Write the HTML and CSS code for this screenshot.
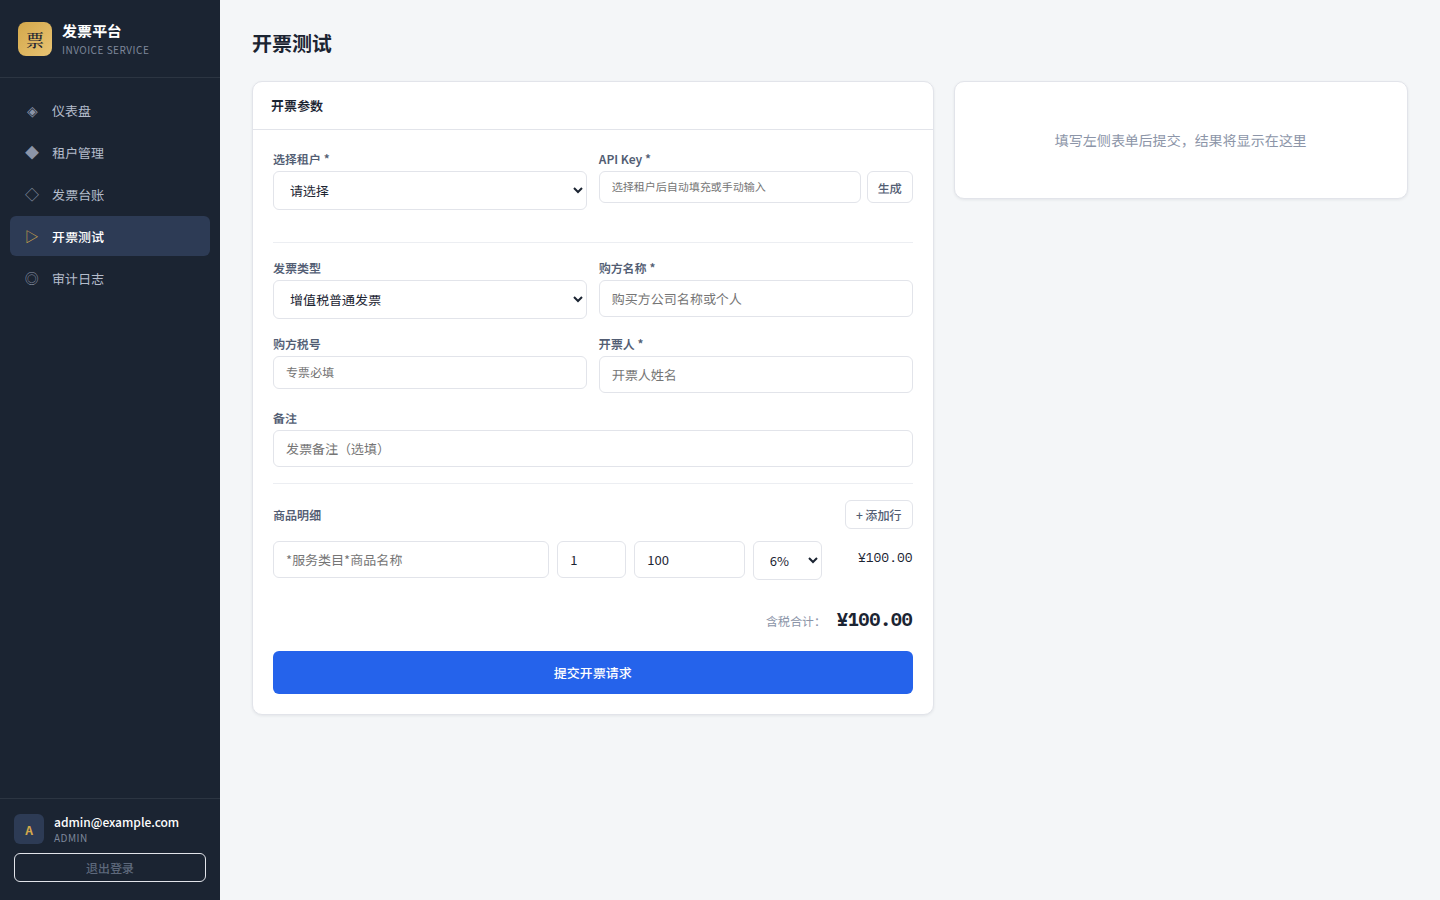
FILE: index.html
```html
<!DOCTYPE html>
<html lang="zh-CN">
<head>
<meta charset="UTF-8">
<meta name="viewport" content="width=device-width, initial-scale=1">
<title>开票测试 - 发票平台</title>
<link rel="stylesheet" href="styles.css">
</head>
<body>
<div class="app">
  <aside class="sidebar">
    <div class="brand">
      <div class="brand-logo">票</div>
      <div>
        <div class="brand-name">发票平台</div>
        <div class="brand-sub">INVOICE SERVICE</div>
      </div>
    </div>
    <nav class="nav">
      <a class="nav-item" href="#dashboard"><span class="nav-icon">◈</span>仪表盘</a>
      <a class="nav-item" href="#tenants"><span class="nav-icon">◆</span>租户管理</a>
      <a class="nav-item" href="#invoices"><span class="nav-icon">◇</span>发票台账</a>
      <a class="nav-item active" href="#test" aria-current="page"><span class="nav-icon">▷</span>开票测试</a>
      <a class="nav-item" href="#audit"><span class="nav-icon">◎</span>审计日志</a>
    </nav>
    <div class="account">
      <div class="account-user">
        <div class="avatar">A</div>
        <div>
          <div class="account-name">admin@example.com</div>
          <div class="account-role">ADMIN</div>
        </div>
      </div>
      <button class="btn-logout" type="button">退出登录</button>
    </div>
  </aside>

  <main class="main">
    <h1 class="page-title">开票测试</h1>
    <div class="columns">
      <section class="card">
        <h2 class="card-head">开票参数</h2>
        <form class="card-body">
          <div class="form-grid">
            <div class="field">
              <label class="label" for="tenant">选择租户 *</label>
              <select class="control select" id="tenant"><option>请选择</option></select>
            </div>
            <div class="field">
              <label class="label" for="apikey">API Key *</label>
              <div class="key-row">
                <input class="control mono key-input" id="apikey" type="text" placeholder="选择租户后自动填充或手动输入">
                <button class="btn-small" type="button">生成</button>
              </div>
            </div>
          </div>
          <hr class="divider">
          <div class="form-grid">
            <div class="field">
              <label class="label" for="type">发票类型</label>
              <select class="control select" id="type"><option>增值税普通发票</option></select>
            </div>
            <div class="field">
              <label class="label" for="buyer">购方名称 *</label>
              <input class="control" id="buyer" type="text" placeholder="购买方公司名称或个人">
            </div>
            <div class="field">
              <label class="label" for="taxno">购方税号</label>
              <input class="control mono tax-input" id="taxno" type="text" placeholder="专票必填">
            </div>
            <div class="field">
              <label class="label" for="drawer">开票人 *</label>
              <input class="control" id="drawer" type="text" placeholder="开票人姓名">
            </div>
          </div>
          <div class="field">
            <label class="label" for="remark">备注</label>
            <input class="control" id="remark" type="text" placeholder="发票备注（选填）">
          </div>
          <hr class="divider">
          <div class="items-head">
            <span class="items-title">商品明细</span>
            <button class="btn-small" type="button">+ 添加行</button>
          </div>
          <div class="item-row">
            <input class="control" type="text" aria-label="商品名称" placeholder="*服务类目*商品名称">
            <input class="control" type="number" aria-label="数量" value="1">
            <input class="control" type="number" aria-label="单价" value="100">
            <select class="control select" aria-label="税率"><option>6%</option></select>
            <div class="item-amount">¥100.00</div>
          </div>
          <div class="total">
            <span class="total-label">含税合计：</span>
            <span class="total-value">¥100.00</span>
          </div>
          <button class="btn-submit" type="submit">提交开票请求</button>
        </form>
      </section>
      <section class="card empty">填写左侧表单后提交，结果将显示在这里</section>
    </div>
  </main>
</div>
</body>
</html>
```
FILE: styles.css
```css
:root {
  --navy: #1b2432;
  --navy-light: #2d3b55;
  --gold: #d4a84b;
  --line: #e2e4ea;
  --text: #1b2432;
  --text-mid: #525d73;
  --text-dim: #8c95a8;
  --sans: "Noto Sans SC", "Noto Sans CJK SC", sans-serif;
  --mono: "IBM Plex Mono", "Liberation Mono", "Noto Sans SC", "Noto Sans CJK SC", monospace;
}

* { box-sizing: border-box; }

body {
  margin: 0;
  background: #f4f6f8;
  color: var(--text);
  font-family: var(--sans);
  font-size: 14px;
}

input, select, button { font-family: inherit; }

.app { display: flex; min-height: 100vh; }

.sidebar {
  position: sticky;
  top: 0;
  display: flex;
  flex-direction: column;
  flex: none;
  width: 220px;
  height: 100vh;
  background: var(--navy);
}

.brand {
  display: flex;
  align-items: center;
  gap: 10px;
  padding: 20px 18px;
  border-bottom: 1px solid rgba(255, 255, 255, 0.08);
}

.brand-logo {
  display: grid;
  place-items: center;
  width: 34px;
  height: 34px;
  border-radius: 8px;
  background: linear-gradient(135deg, #d4a84b, #e8c373);
  color: var(--navy);
  font-family: "Noto Serif SC", "Noto Serif CJK SC", serif;
  font-size: 18px;
  line-height: 24px;
  font-weight: 500;
}

.brand-name { color: #fff; font-size: 15px; line-height: 22px; font-weight: 700; }
.brand-sub { color: #7d879a; font-size: 10px; line-height: 15px; letter-spacing: 0.5px; }

.nav {
  display: flex;
  flex: 1;
  flex-direction: column;
  gap: 2px;
  padding: 12px 10px;
}

.nav-item {
  display: flex;
  align-items: center;
  gap: 10px;
  height: 40px;
  padding: 0 12px;
  border-radius: 6px;
  color: #b4bccb;
  font-size: 13px;
  line-height: 21px;
  text-decoration: none;
}

.nav-icon { width: 20px; color: #8c95a8; font-size: 14px; line-height: 18px; text-align: center; }
.nav-item.active { background: var(--navy-light); color: #fff; font-weight: 500; }
.nav-item.active .nav-icon { color: var(--gold); }

.account { padding: 14px 14px 18px; border-top: 1px solid rgba(255, 255, 255, 0.08); }
.account-user { display: flex; align-items: center; gap: 10px; margin-bottom: 8px; }

.avatar {
  display: grid;
  place-items: center;
  width: 30px;
  height: 30px;
  border-radius: 6px;
  background: var(--navy-light);
  color: var(--gold);
  font-size: 12px;
  font-weight: 700;
}

.account-name { color: #fff; font-size: 12px; line-height: 17px; font-weight: 500; }
.account-role { color: #7d879a; font-size: 10px; line-height: 15px; letter-spacing: 0.5px; }

.btn-logout {
  width: 100%;
  height: 29px;
  padding: 0;
  border: 1px solid var(--line);
  border-radius: 6px;
  background: transparent;
  color: #5d687b;
  font-size: 12px;
  font-weight: 500;
}

.main { flex: 1; min-width: 0; padding: 28px 32px; }
.page-title { margin: 0 0 24px; font-size: 20px; line-height: 29px; font-weight: 700; }

.columns {
  display: grid;
  grid-template-columns: 3fr 2fr;
  align-items: start;
  gap: 20px;
}

.card {
  border: 1px solid var(--line);
  border-radius: 10px;
  background: #fff;
  box-shadow: 0 1px 3px rgba(27, 36, 50, 0.08);
}

.card-head {
  margin: 0;
  padding: 14px 18px;
  border-bottom: 1px solid var(--line);
  font-size: 13px;
  line-height: 19px;
  font-weight: 600;
}

.card-body { padding: 20px; }

.empty {
  padding: 48px 20px;
  color: var(--text-dim);
  font-size: 14px;
  line-height: 20px;
  text-align: center;
}

.form-grid { display: grid; grid-template-columns: 1fr 1fr; column-gap: 12px; }
.field { margin-bottom: 16px; }

.label {
  display: block;
  margin-bottom: 4px;
  color: var(--text-mid);
  font-size: 12px;
  line-height: 17px;
  font-weight: 600;
}

.control {
  display: block;
  width: 100%;
  min-width: 0;
  height: 37px;
  padding: 8px 12px;
  border: 1px solid var(--line);
  border-radius: 6px;
  background: #fff;
  color: var(--text);
  font-size: 13px;
}

.select { height: 39px; }
.mono { font-family: var(--mono); }
.key-row { display: flex; gap: 6px; }
.key-input { flex: 1; height: 32px; font-size: 11px; }
.tax-input { height: 33px; font-size: 12px; }

.btn-small {
  flex: none;
  padding: 5px 10px;
  border: 1px solid var(--line);
  border-radius: 6px;
  background: #fff;
  color: var(--text-mid);
  font-size: 12px;
  line-height: 17px;
  font-weight: 500;
}

.divider { margin: 16px 0; border: 0; border-top: 1px solid #eceef2; }

.items-head {
  display: flex;
  align-items: center;
  justify-content: space-between;
  margin-bottom: 12px;
}

.items-title { color: var(--text-mid); font-size: 12px; font-weight: 600; }

.item-row {
  display: grid;
  grid-template-columns: 20fr 5fr 8fr 5fr 6fr;
  align-items: start;
  gap: 8px;
  margin-bottom: 24px;
}

.item-amount {
  padding-top: 8px;
  font-family: var(--mono);
  font-size: 13px;
  line-height: 17px;
  text-align: right;
}

.total {
  display: flex;
  align-items: baseline;
  justify-content: flex-end;
  gap: 11px;
  margin-bottom: 16px;
}

.total-label { color: var(--text-dim); font-size: 12px; }
.total-value { font-family: var(--mono); font-size: 18px; line-height: 31px; font-weight: 700; }

.btn-submit {
  width: 100%;
  padding: 12px;
  border: 0;
  border-radius: 6px;
  background: #2563eb;
  color: #fff;
  font-size: 13px;
  line-height: 19px;
  font-weight: 500;
}
```
